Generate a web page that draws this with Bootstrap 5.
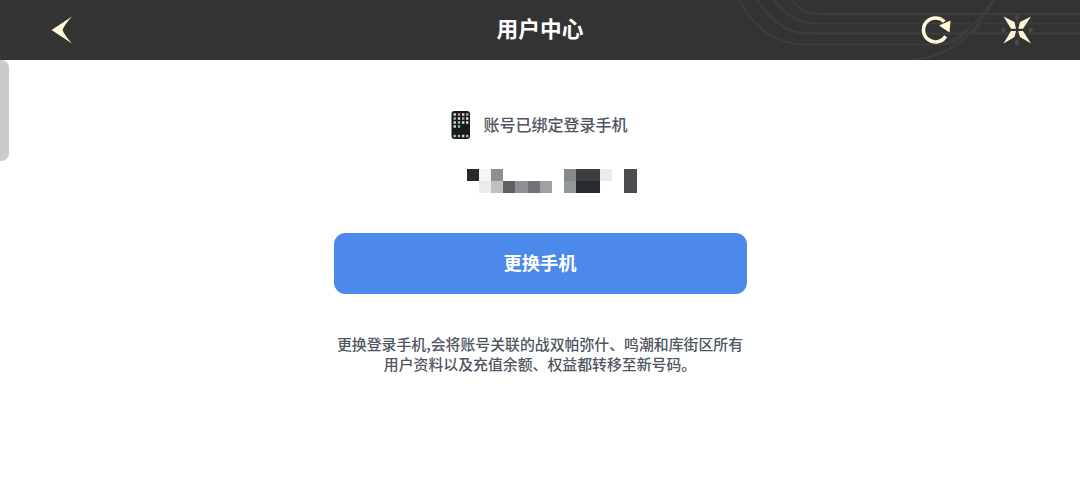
<!DOCTYPE html>
<html lang="zh-CN">
<head>
<meta charset="utf-8">
<meta name="viewport" content="width=device-width, initial-scale=1">
<title>用户中心</title>
<link href="https://cdn.jsdelivr.net/npm/bootstrap@5.3.0/dist/css/bootstrap.min.css" rel="stylesheet">
<style>
body{font-family:"Noto Sans CJK SC",sans-serif;background:#fff;color:#4f5563;height:483px}
.topbar{height:60px;background:#333;color:#fff}
.topbar-lines{position:absolute;top:0;right:0}
.topbar-title{font-size:21.7px;font-weight:700;line-height:56px;height:60px}
.tool-btn{width:36px;height:36px;line-height:0}
.tool-group{gap:46px;margin-right:44px}
.side-handle{position:absolute;left:0;top:60px;width:9px;height:101px;background:#cbcbcb;border-radius:0 8px 8px 0}
.account-panel{width:413px;padding-top:50px}
.bind-row{height:30px;font-size:16px;font-weight:500;padding-right:1px}
.bind-row span{padding-bottom:2px}
.phone-icon{margin-right:12px}
.mosaic{margin:29px 0 0 133.500px;height:24px;width:169.500px;display:block}
.change-btn{--bs-btn-color:#fff;--bs-btn-bg:#4b89ea;--bs-btn-border-color:#4b89ea;--bs-btn-hover-bg:#3f7bdc;--bs-btn-hover-color:#fff;height:61px;margin-top:40px;padding-bottom:8px;border-radius:11px;font-size:18.3px;font-weight:700;line-height:1}
.notice{margin-top:40px;font-size:14.88px;line-height:20px;font-weight:500}
</style>
</head>
<body class="position-relative overflow-hidden">
<header class="topbar position-relative d-flex align-items-center justify-content-between">
  <svg class="topbar-lines" width="350" height="60" viewBox="730 0 350 60" fill="none" stroke="#3d3d3d" stroke-width="2" aria-hidden="true">
    <path d="M739-2C750 26 776 44.500 806 44.500H943C962 36 981 20 995-3"/>
    <path d="M756-2C768 18 785 33.500 809 33.500H960"/>
    <path d="M773-2C783 13 797 23.500 816 23.500H970"/>
    <path d="M790-2C797 8 806 14 818 14H1080M983 23.500H1080M970 33.500H1080M912 60C947 57 976 36 995-3M943 44.500Q956 43 963 34.500M960 33.500Q976 35 980 23.500"/>
  </svg>
  <a class="tool-btn position-relative ms-5" href="#" aria-label="返回">
    <svg width="36" height="36" viewBox="48 12 36 36"><path fill="#fff9d8" d="M72 16.500 51.500 30 72 43.500Q65 36 62.500 30 65 24 72 16.500Z"/></svg>
  </a>
  <h1 class="topbar-title position-absolute start-50 translate-middle-x m-0">用户中心</h1>
  <div class="tool-group position-relative d-flex">
    <a class="tool-btn" href="#" aria-label="刷新">
      <svg width="36" height="36" viewBox="918 12 36 36"><path d="M945.700 36.200A12 12 0 1 1 944.300 21.800" fill="none" stroke="#fff9d8" stroke-width="3.600"/><path fill="#fff9d8" d="M950.500 20.500 949.500 32.500 939 25.500Z"/></svg>
    </a>
    <a class="tool-btn" href="#" aria-label="关闭">
      <svg width="36" height="36" viewBox="1000 12 36 36"><path fill="#484848" d="m1017 14 3 3.500-3 3.500-3-3.500zm0 25 3 3.500-3 3.500-3-3.500zm-13.500-12 3 3-3 3-3-3zm27 0 3 3-3 3-3-3z"/><path fill="#fff9d8" d="M1003.500 16.500 1014.500 22 1016 28.700H1011ZM1031 16.500 1020 22 1018.300 28.700H1023ZM1003.500 43.500 1011 31H1016L1014.500 37ZM1031 43.500 1023 31H1018.300L1020 37Z"/></svg>
    </a>
  </div>
</header>
<div class="side-handle"></div>
<main class="account-panel mx-auto">
  <div class="bind-row d-flex align-items-center justify-content-center">
    <svg class="phone-icon" width="20" height="30" viewBox="0 0 20 30" aria-hidden="true">
      <rect x=".5" y="1" width="18.500" height="28" rx="3" fill="#171b19"/>
      <g stroke-width="2.400">
        <path stroke="#d7dfda" d="M2.500 4.500h2.400M11 4.500h2.400M15 8.500h2.400M6.800 8.500h2.400M2.500 12.500h2.400M11 12.500h2.400M15 12.500h2.400M2.500 16.500h2.400M11 26h2.400"/>
        <path stroke="#d49896" d="M6.800 4.500h2.400M15 4.500h2.400M11 8.500h2.400"/>
        <path stroke="#9fb9c8" d="M2.500 8.500h2.400M6.800 12.500h2.400M6.800 26h2.400M15 26h2.400"/>
        <path stroke="#8bc77b" d="M6.800 16.500h2.400M2.500 26h2.400"/>
      </g>
    </svg>
    <span>账号已绑定登录手机</span>
  </div>
  <svg class="mosaic" viewBox="0 0 14 2" preserveAspectRatio="none" shape-rendering="crispEdges" role="img" aria-label="手机号">
    <path fill="#29292d" d="M0 0h1v1H0z"/><path fill="#f5f5f5" d="M1 0h1v1H1z"/><path fill="#8e8f8f" d="M2 0h1v1H2z"/>
    <path fill="#ebebeb" d="M1 1h1v1H1zM11 0h1v1h-1z"/><path fill="#bfc1c1" d="M2 1h1v1H2z"/><path fill="#5f6064" d="M3 1h1v1H3z"/>
    <path fill="#8f9094" d="M4 1h1v1H4z"/><path fill="#717276" d="M5 1h1v1H5z"/><path fill="#a0a1a2" d="M6 1h1v1H6z"/>
    <path fill="#88898a" d="M8 0h1v1H8z"/><path fill="#949799" d="M8 1h1v1H8z"/><path fill="#3d3e40" d="M9 0h2v1H9z"/>
    <path fill="#282b2f" d="M9 1h2v1H9z"/><path fill="#4c4d51" d="M13 0h1v2h-1z"/>
  </svg>
  <button class="btn change-btn w-100 d-block" type="button">更换手机</button>
  <p class="notice text-center text-nowrap mb-0">更换登录手机,会将账号关联的战双帕弥什、鸣潮和库街区所有<br>用户资料以及充值余额、权益都转移至新号码。</p>
</main>
<script src="https://cdn.jsdelivr.net/npm/bootstrap@5.3.0/dist/js/bootstrap.bundle.min.js"></script>
</body>
</html>
